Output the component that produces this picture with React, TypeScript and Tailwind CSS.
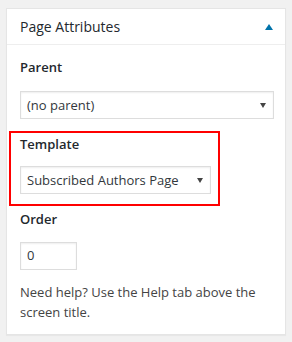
import React from "react";

const font = { fontFamily: '"Open Sans", "Noto Sans", sans-serif' };

const SelectBox: React.FC<{ value: string; className?: string }> = ({ value, className }) => (
  <div
    className={`flex h-[28px] items-center justify-between border border-[#ddd] bg-white pl-[6px] pr-[7px] text-[13px] text-[#32373c] shadow-[inset_0_1px_2px_rgba(0,0,0,0.07)] ${className ?? ""}`}
  >
    <span className="leading-[20px]">{value}</span>
    <svg width="6" height="5" viewBox="0 0 6 5" className="shrink-0">
      <path d="M0 0H6L3 5Z" fill="#444" />
    </svg>
  </div>
);

export default function App() {
  return (
    <div className="h-[342px] w-[292px] bg-[#f1f1f1] px-[6px] pt-[8px]" style={font}>
      <div className="w-[280px] border border-[#e5e5e5] bg-white shadow-[0_1px_1px_rgba(0,0,0,0.04)]">
        <div className="flex h-[36px] items-center justify-between border-b border-[#eee] pl-[13px] pr-[12px]">
          <h2 className="text-[14px] leading-[20px] text-[#23282d]">Page Attributes</h2>
          <svg width="8" height="6" viewBox="0 0 8 6">
            <path d="M0 6L4 0L8 6Z" fill="#0073aa" />
          </svg>
        </div>

        <div className="px-[13px] pb-[12px]">
          <p className="mt-[12px] text-[13px] font-semibold leading-[20px] text-[#23282d]">Parent</p>
          <SelectBox value="(no parent)" className="mt-[14px] w-[254px]" />

          <div className="-ml-[11px] mt-[12px] w-[211px] border-2 border-[#f00] pb-[10px] pl-[9px] pr-[7px] pt-px">
            <p className="text-[13px] font-semibold leading-[20px] text-[#23282d]">Template</p>
            <SelectBox value="Subscribed Authors Page" className="mt-[12px]" />
          </div>

          <p className="mt-[3px] text-[13px] font-semibold leading-[20px] text-[#23282d]">Order</p>
          <div className="mt-[13px] flex h-[28px] w-[57px] items-center border border-[#ddd] bg-white pl-[6px] text-[13px] text-[#32373c] shadow-[inset_0_1px_2px_rgba(0,0,0,0.07)]">
            0
          </div>

          <p className="mt-[12px] text-[13px] leading-[20px] text-[#444]">
            Need help? Use the Help tab above the screen title.
          </p>
        </div>
      </div>
    </div>
  );
}
